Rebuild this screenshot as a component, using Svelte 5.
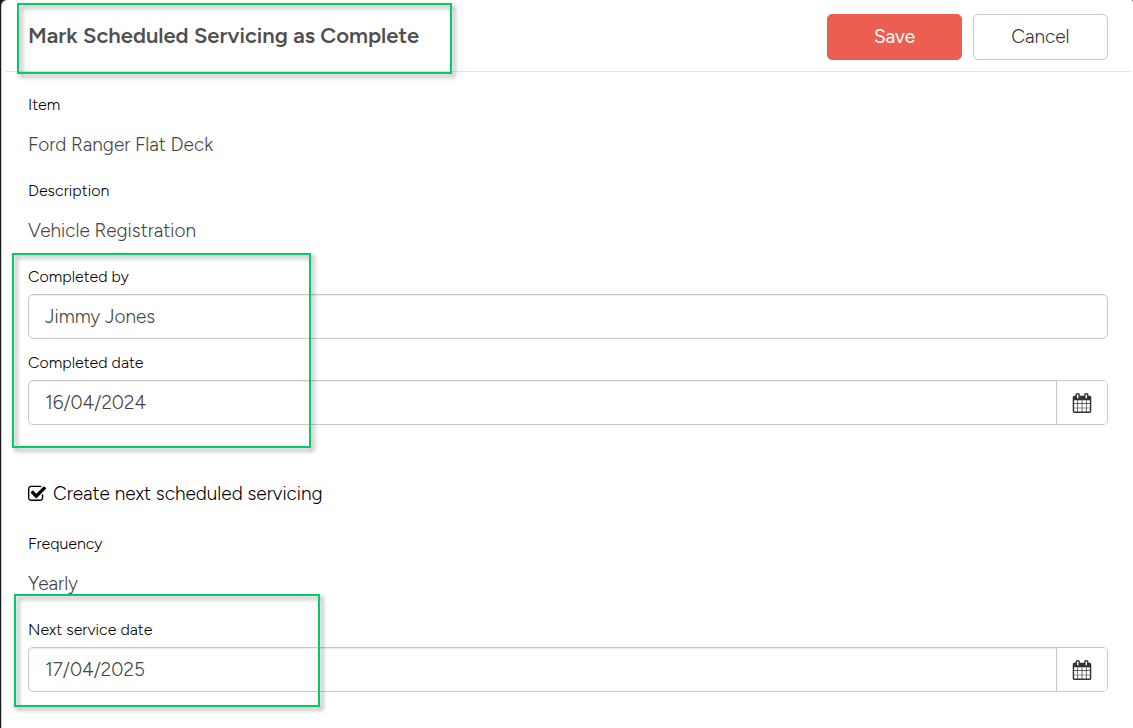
<script>
  let completedBy = $state("Jimmy Jones");
  let completedDate = $state("16/04/2024");
  let nextDate = $state("17/04/2025");
  let createNext = $state(true);
</script>

{#snippet calendarIcon()}
  <svg class="calendar" viewBox="0 0 1792 1792" aria-hidden="true">
    <path d="M192 1664h288v-288h-288v288zm352 0h320v-288h-320v288zm-352-352h288v-320h-288v320zm352 0h320v-320h-320v320zm-352-384h288v-288h-288v288zm736 736h320v-288h-320v288zm-384-736h320v-288h-320v288zm768 736h288v-288h-288v288zm-384-352h320v-320h-320v320zm-352-864v-288q0-13-9.5-22.5t-22.5-9.5h-64q-13 0-22.5 9.5t-9.5 22.5v288q0 13 9.5 22.5t22.5 9.5h64q13 0 22.5-9.5t9.5-22.5zm736 864h288v-320h-288v320zm-384-384h320v-288h-320v288zm384 0h288v-288h-288v288zm32-480v-288q0-13-9.5-22.5t-22.5-9.5h-64q-13 0-22.5 9.5t-9.5 22.5v288q0 13 9.5 22.5t22.5 9.5h64q13 0 22.5-9.5t9.5-22.5zm384-64v1280q0 52-38 90t-90 38h-1408q-52 0-90-38t-38-90v-1280q0-52 38-90t90-38h128v-96q0-66 47-113t113-47h64q66 0 113 47t47 113v96h384v-96q0-66 47-113t113-47h64q66 0 113 47t47 113v96h128q52 0 90 38t38 90z" />
  </svg>
{/snippet}

<form class="modal" onsubmit={(e) => e.preventDefault()}>
  <header>
    <div class="title">
      <h1>Mark Scheduled Servicing as Complete</h1>
      <span class="highlight highlight-title"></span>
    </div>
    <div class="actions">
      <button class="btn save" type="submit">Save</button>
      <button class="btn" type="button">Cancel</button>
    </div>
  </header>

  <main>
    <dl class="field">
      <dt class="label">Item</dt>
      <dd class="value">Ford Ranger Flat Deck</dd>
    </dl>
    <dl class="field">
      <dt class="label">Description</dt>
      <dd class="value">Vehicle Registration</dd>
    </dl>

    <div class="group">
      <div class="field">
        <label class="label" for="completed-by">Completed by</label>
        <div class="control">
          <input id="completed-by" type="text" bind:value={completedBy} />
        </div>
      </div>
      <div class="field">
        <label class="label" for="completed-date">Completed date</label>
        <div class="control">
          <input id="completed-date" type="text" bind:value={completedDate} />
          <button class="picker" type="button" aria-label="Pick completed date">
            {@render calendarIcon()}
          </button>
        </div>
      </div>
      <span class="highlight highlight-completed"></span>
    </div>

    <label class="check">
      <span class="box">
        <input type="checkbox" bind:checked={createNext} />
        <svg viewBox="64 0 1664 1792" aria-hidden="true">
          <path d="M1472 930v318q0 119-84.5 203.5t-203.5 84.5h-832q-119 0-203.5-84.5t-84.5-203.5v-832q0-119 84.5-203.5t203.5-84.5h832q63 0 117 25 15 7 18 23 3 17-9 29l-49 49q-10 10-23 10-3 0-9-2-23-6-45-6h-832q-66 0-113 47t-47 113v832q0 66 47 113t113 47h832q66 0 113-47t47-113v-254q0-13 9-22l64-64q10-10 23-10 6 0 12 3 20 8 20 29z" />
          {#if createNext}
            <path d="M1703 441l-814 814q-24 24-57 24t-57-24l-430-430q-24-24-24-57t24-57l110-110q24-24 57-24t57 24l263 263 647-647q24-24 57-24t57 24l110 110q24 24 24 57t-24 57z" />
          {/if}
        </svg>
      </span>
      Create next scheduled servicing
    </label>

    <dl class="field">
      <dt class="label">Frequency</dt>
      <dd class="value">Yearly</dd>
    </dl>

    <div class="group">
      <div class="field">
        <label class="label" for="next-date">Next service date</label>
        <div class="control">
          <input id="next-date" type="text" bind:value={nextDate} />
          <button class="picker" type="button" aria-label="Pick next service date">
            {@render calendarIcon()}
          </button>
        </div>
      </div>
      <span class="highlight highlight-next"></span>
    </div>
  </main>
</form>

<style>
  :global(body) {
    background: #1d1b22;
  }

  .modal {
    box-sizing: border-box;
    min-height: 100vh;
    margin-left: 1px;
    padding: 0 2px 0 4px;
    border-left: 1px solid #c8c8c8;
    border-radius: 6px 2px 0 0;
    background: #fff;
    color: #444;
    font-family: Figtree, Lato, sans-serif;
    font-size: 19px;
    font-weight: 300;
  }

  header {
    display: flex;
    align-items: center;
    justify-content: space-between;
    padding: 14px 23px 11px 22px;
    border-bottom: 1px solid #e2e2e2;
  }

  .title,
  .group {
    position: relative;
  }

  h1 {
    margin: 0;
    padding-bottom: 2px;
    color: #4f4f4f;
    font-size: 22px;
    font-weight: 600;
    line-height: 26px;
  }

  .actions {
    display: flex;
    gap: 11px;
  }

  .btn {
    width: 135px;
    height: 46px;
    padding: 0 0 2px;
    border: 1px solid #c8c8c8;
    border-radius: 5px;
    background: #fff;
    color: #333;
    font: inherit;
  }

  .save {
    border-color: #ec5f50;
    background: #ec5f50;
    color: #fff;
    font-weight: 400;
  }

  main {
    padding: 23px 23px 20px 22px;
  }

  .field {
    display: flex;
    flex-direction: column;
    gap: 7px;
    margin: 0 0 14px;
  }

  .label {
    color: #000;
    font-size: 16px;
    line-height: 20px;
  }

  .value {
    margin: 0;
    line-height: 45px;
  }

  .control {
    display: flex;
    box-sizing: border-box;
    height: 45px;
    border: 1px solid #c8c8c8;
    border-radius: 5px;
    box-shadow: inset 0 1px 1px rgba(0, 0, 0, 0.08);
  }

  .control input {
    flex: 1;
    min-width: 0;
    padding: 0 16px;
    border: 0;
    background: none;
    color: inherit;
    font: inherit;
  }

  .picker {
    display: grid;
    place-items: center;
    width: 51px;
    padding: 0;
    border: 0;
    border-left: 1px solid #c8c8c8;
    border-radius: 0 4px 4px 0;
    background: #fff;
  }

  .calendar {
    width: 20px;
    height: 20px;
    fill: #333;
  }

  .check {
    display: flex;
    align-items: center;
    gap: 7px;
    margin: 57px 0 28px;
    color: #000;
    line-height: 24px;
  }

  .box {
    display: grid;
    width: 18px;
    height: 20px;
  }

  .box input,
  .box svg {
    grid-area: 1 / 1;
    width: 18px;
    height: 20px;
    margin: 0;
  }

  .box input {
    appearance: none;
  }

  .box svg {
    fill: #000;
    pointer-events: none;
  }

  /* marker frames laid over the form */
  .highlight {
    position: absolute;
    box-sizing: border-box;
    border: 2px solid #06c967;
    filter: drop-shadow(3px 3px 2px rgba(0, 0, 0, 0.4));
    pointer-events: none;
  }

  .highlight-title {
    top: -20px;
    bottom: -23px;
    left: -11px;
    width: 435px;
  }

  .highlight-completed {
    top: -14px;
    bottom: -23px;
    left: -16px;
    width: 299px;
  }

  .highlight-next {
    top: -26px;
    bottom: -15px;
    left: -14px;
    width: 306px;
  }
</style>
